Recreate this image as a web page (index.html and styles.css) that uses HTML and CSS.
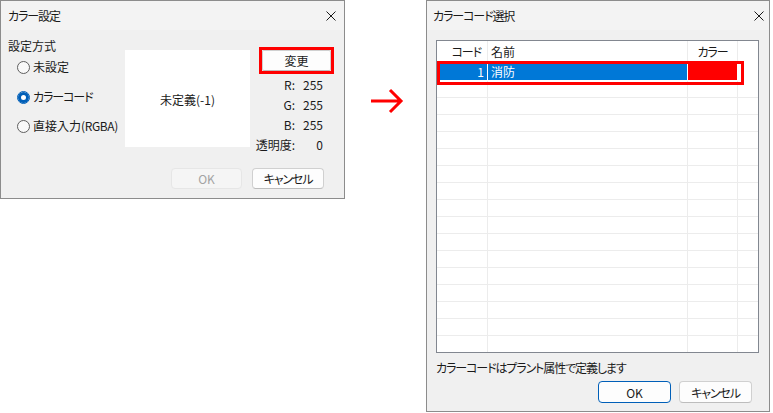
FILE: index.html
```html
<!DOCTYPE html>
<html lang="ja">
<head>
  <meta charset="UTF-8" />
  <meta name="viewport" content="width=device-width, initial-scale=1.0"/>
  <title>カラー設定</title>
  <link rel="stylesheet" href="styles.css">
</head>
<body>
  <div class="dlg set">
    <div class="dlg-title">
      <span class="kana">カラー設定</span>
      <svg class="close" width="10" height="10" viewBox="0 0 10 10"><path d="M0.5 0.5L9.5 9.5M9.5 0.5L0.5 9.5" stroke="#1a1a1a" stroke-width="1" fill="none"/></svg>
    </div>

    <div class="set-main">
      <div class="method">
        <div class="method-label">設定方式</div>
        <label class="radio r1"><span class="dot"></span><span>未設定</span></label>
        <label class="radio r2"><span class="dot on"></span><span class="kana">カラーコード</span></label>
        <label class="radio r3"><span class="dot"></span><span>直接入力<span class="latin">(RGBA)</span></span></label>
      </div>

      <div class="swatch">未定義(-1)</div>

      <div class="side">
        <div class="mark btn-mark">
          <button class="btn btn-change">変更</button>
        </div>
        <div class="rgb">
          <span class="k">R:</span><span class="v">255</span>
          <span class="k">G:</span><span class="v">255</span>
          <span class="k">B:</span><span class="v">255</span>
          <span class="k">透明度:</span><span class="v">0</span>
        </div>
      </div>
    </div>

    <div class="set-foot">
      <button class="btn btn-ok" disabled>OK</button>
      <button class="btn btn-cancel kana">キャンセル</button>
    </div>
  </div>

  <svg class="arrow" width="40" height="30" viewBox="0 0 40 30">
    <path d="M3 15H33M22 4L33 15L22 26" stroke="#ff0000" stroke-width="3" fill="none"/>
  </svg>

  <div class="dlg pick">
    <div class="dlg-title pick-title">
      <span class="kana">カラーコード選択</span>
      <svg class="close" width="10" height="10" viewBox="0 0 10 10"><path d="M0.5 0.5L9.5 9.5M9.5 0.5L0.5 9.5" stroke="#1a1a1a" stroke-width="1" fill="none"/></svg>
    </div>

    <div class="pick-body">
      <div class="list">
        <div class="list-row head">
          <div class="cell num kana">コード</div>
          <div class="cell">名前</div>
          <div class="cell mid kana">カラー</div>
          <div class="cell last"></div>
        </div>
        <div class="list-row sel">
          <div class="cell num">1</div>
          <div class="cell">消防</div>
          <div class="cell red"></div>
          <div class="cell last"></div>
        </div>
        <div class="list-row"><div class="cell"></div><div class="cell"></div><div class="cell"></div><div class="cell last"></div></div>
        <div class="list-row"><div class="cell"></div><div class="cell"></div><div class="cell"></div><div class="cell last"></div></div>
        <div class="list-row"><div class="cell"></div><div class="cell"></div><div class="cell"></div><div class="cell last"></div></div>
        <div class="list-row"><div class="cell"></div><div class="cell"></div><div class="cell"></div><div class="cell last"></div></div>
        <div class="list-row"><div class="cell"></div><div class="cell"></div><div class="cell"></div><div class="cell last"></div></div>
        <div class="list-row"><div class="cell"></div><div class="cell"></div><div class="cell"></div><div class="cell last"></div></div>
        <div class="list-row"><div class="cell"></div><div class="cell"></div><div class="cell"></div><div class="cell last"></div></div>
        <div class="list-row"><div class="cell"></div><div class="cell"></div><div class="cell"></div><div class="cell last"></div></div>
        <div class="list-row"><div class="cell"></div><div class="cell"></div><div class="cell"></div><div class="cell last"></div></div>
        <div class="list-row"><div class="cell"></div><div class="cell"></div><div class="cell"></div><div class="cell last"></div></div>
        <div class="list-row"><div class="cell"></div><div class="cell"></div><div class="cell"></div><div class="cell last"></div></div>
        <div class="list-row"><div class="cell"></div><div class="cell"></div><div class="cell"></div><div class="cell last"></div></div>
        <div class="list-row"><div class="cell"></div><div class="cell"></div><div class="cell"></div><div class="cell last"></div></div>
        <div class="list-row"><div class="cell"></div><div class="cell"></div><div class="cell"></div><div class="cell last"></div></div>
        <div class="list-row"><div class="cell"></div><div class="cell"></div><div class="cell"></div><div class="cell last"></div></div>
        <div class="list-row"><div class="cell"></div><div class="cell"></div><div class="cell"></div><div class="cell last"></div></div>
        <div class="mark row-mark"></div>
      </div>

      <div class="note kana">カラーコードはプラント属性で定義します</div>

      <div class="pick-foot">
        <button class="btn btn-ok btn-default">OK</button>
        <button class="btn btn-cancel kana">キャンセル</button>
      </div>
    </div>
  </div>
</body>
</html>
```

FILE: styles.css
```css
body {
  margin: 0;
  background: #ffffff;
  font-family: "Noto Sans CJK JP", "Noto Sans", sans-serif;
  font-size: 12px;
  color: #1a1a1a;
  font-feature-settings: "palt";
  display: flex;
  align-items: flex-start;
}

/* Noto の仮名は元画面より幅が広いので詰める */
.kana {
  letter-spacing: -1.1px;
}

.latin {
  letter-spacing: -0.4px;
}

.dlg {
  background: #f0f0f0;
  border: 1px solid #8c8c8c;
  box-sizing: border-box;
}

.dlg-title {
  height: 29px;
  display: flex;
  align-items: center;
  justify-content: space-between;
  padding: 0 8px 0 7px;
  background: #f3f3f3;
}

.close {
  display: block;
}

/* カラー設定 */
.set {
  width: 345px;
  height: 199px;
}

.set-main {
  display: flex;
  height: 130px;
}

.method {
  width: 117px;
  padding: 8px 0 0 7px;
}

.method-label {
  line-height: 16px;
}

.radio {
  display: flex;
  align-items: center;
  gap: 3px;
  padding-left: 9px;
  line-height: 16px;
  white-space: nowrap;
}

.r1 { margin-top: 5px; }
.r2 { margin-top: 14px; }
.r3 { margin-top: 13px; }

.dot {
  width: 11px;
  height: 11px;
  border: 1px solid #5f5f5f;
  border-radius: 50%;
  background: #f9f9f9;
}

.dot.on {
  border-color: #005fb8;
  background: #ffffff;
  box-shadow: inset 0 0 0 3px #005fb8;
}

.swatch {
  width: 125px;
  height: 97px;
  margin-top: 20px;
  padding-top: 2px;
  box-sizing: border-box;
  background: #ffffff;
  display: flex;
  align-items: center;
  justify-content: center;
}

.side {
  width: 84px;
  margin-top: 17px;
}

.btn-mark {
  margin-left: 9px;
  width: 69px;
  height: 21px;
  border: 3px solid #ff0000;
}

.btn {
  font-family: inherit;
  font-size: 12px;
  font-feature-settings: "palt";
  color: #1a1a1a;
  background: #fdfdfd;
  border: 1px solid #d0d0d0;
  border-bottom-color: #bdbdbd;
  border-radius: 4px;
  padding: 0;
  box-sizing: border-box;
}

.btn-change {
  width: 69px;
  height: 21px;
  border-radius: 2px;
  display: block;
}

.rgb {
  display: grid;
  grid-template-columns: 45px 28px;
  margin-top: 1px;
  line-height: 20px;
}

.rgb .k,
.rgb .v {
  text-align: right;
}

.set-foot {
  display: flex;
  justify-content: flex-end;
  gap: 10px;
  padding: 8px 20px 0 0;
}

.set-foot .btn-ok {
  width: 71px;
  height: 21px;
}

.set-foot .btn-cancel {
  width: 72px;
  height: 21px;
}

.btn:disabled {
  background: #f5f5f5;
  border-color: #e6e6e6;
  color: #a3a3a3;
}

.arrow {
  display: block;
  margin: 86px 0 0 23px;
}

/* カラーコード選択 */
.pick {
  width: 344px;
  height: 412px;
  margin-left: 18px;
}

.pick-title {
  padding: 0 5px 0 6px;
}

.pick-body {
  padding: 10px 10px 0 9px;
}

.list {
  position: relative;
  height: 311px;
  overflow: hidden;
  background: #ffffff;
  border: 1px solid #828790;
}

.list-row {
  display: grid;
  grid-template-columns: 51px 200px 50px 1fr;
  height: 17px;
  line-height: 16px;
}

.cell {
  box-sizing: border-box;
  border-right: 1px solid #ececec;
  border-bottom: 1px solid #ececec;
  padding-left: 3px;
  white-space: nowrap;
  overflow: hidden;
}

.cell.last {
  border-right: none;
}

.cell.num {
  text-align: right;
  padding: 0 3px 0 0;
}

.cell.mid {
  text-align: center;
  padding: 0;
}

.list-row.head {
  height: 23px;
  line-height: 22px;
}

.list-row.head .cell {
  border-bottom: none;
}

.list-row.head .num {
  padding-right: 6px;
}

.list-row.sel .cell {
  background: #0078d7;
  color: #ffffff;
  border-right-color: #ffffff;
  border-bottom-color: #ffffff;
}

.list-row.sel .cell.red {
  background: #ff0000;
}

.list-row.sel .cell.last {
  background: #ffffff;
}

.row-mark {
  position: absolute;
  left: 0;
  top: 20px;
  width: 307px;
  height: 24px;
  box-sizing: border-box;
  border: 3px solid #ff0000;
}

.note {
  margin-top: 7px;
  line-height: 16px;
}

.pick-foot {
  display: flex;
  justify-content: flex-end;
  gap: 8px;
  margin-top: 5px;
  padding-right: 7px;
}

.pick-foot .btn {
  width: 73px;
  height: 22px;
}

.btn-default {
  border-color: #005fb8;
}
```
